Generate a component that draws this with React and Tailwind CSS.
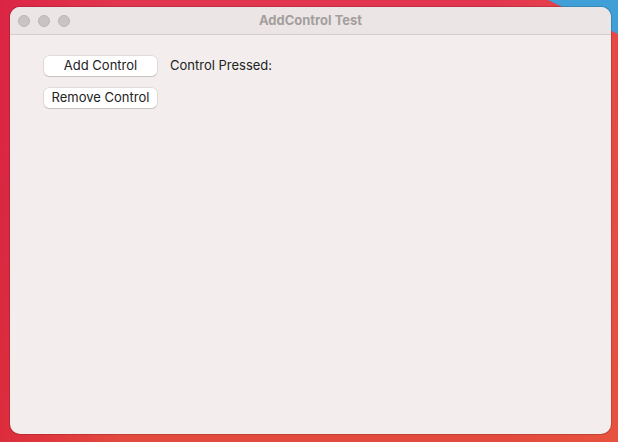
export default function App() {
  return (
    <div
      className="w-[618px] h-[442px] overflow-hidden relative"
      style={{ fontFamily: 'Inter, "Liberation Sans", Arial, sans-serif' }}
    >
      <div className="absolute inset-0 bg-[linear-gradient(180deg,#e23650_0%,#df3d48_50%,#e34a3e_100%)]" />
      <div className="absolute inset-0 bg-[linear-gradient(90deg,rgba(215,25,60,0.6)_0%,rgba(215,25,60,0)_20%,rgba(0,0,0,0)_80%,rgba(235,90,60,0.5)_100%)]" />
      <div className="absolute right-0 top-0 w-[70px] h-[34px] bg-[#3f9fd6] [clip-path:polygon(0_0,100%_0,100%_100%)]" />
      <div className="relative pt-[7px] pl-[10px] pr-[7px]">
        <div className="w-[601px] h-[427px] rounded-[10px] bg-[#f3eeed] overflow-hidden shadow-[0_0_0_1px_rgba(0,0,0,0.15)] flex flex-col">
          <div className="h-[28px] bg-[#ebe6e5] border-b border-[#d5d0cf] relative flex items-center shrink-0">
            <div className="flex gap-[8px] pl-[8px]">
              <div className="w-[12px] h-[12px] rounded-full bg-[#c9c4c4] border border-[#bab5b5]" />
              <div className="w-[12px] h-[12px] rounded-full bg-[#c9c4c4] border border-[#bab5b5]" />
              <div className="w-[12px] h-[12px] rounded-full bg-[#c9c4c4] border border-[#bab5b5]" />
            </div>
            <div className="absolute inset-0 flex items-center justify-center text-[13px] font-bold text-[#a49e9d]">
              AddControl Test
            </div>
          </div>
          <div className="pl-[34px] pt-[21px] flex flex-col gap-[12px] text-[13px] text-[#222]">
            <div className="flex items-center gap-[13px]">
              <div className="w-[113px] h-[20px] rounded-[5px] bg-white shadow-[0_0_0_0.5px_rgba(0,0,0,0.15),0_1px_1px_rgba(0,0,0,0.12)] flex items-center justify-center">
                Add Control
              </div>
              <div>Control Pressed:</div>
            </div>
            <div className="flex items-center">
              <div className="w-[113px] h-[20px] rounded-[5px] bg-white shadow-[0_0_0_0.5px_rgba(0,0,0,0.15),0_1px_1px_rgba(0,0,0,0.12)] flex items-center justify-center">
                Remove Control
              </div>
            </div>
          </div>
        </div>
      </div>
    </div>
  );
}
